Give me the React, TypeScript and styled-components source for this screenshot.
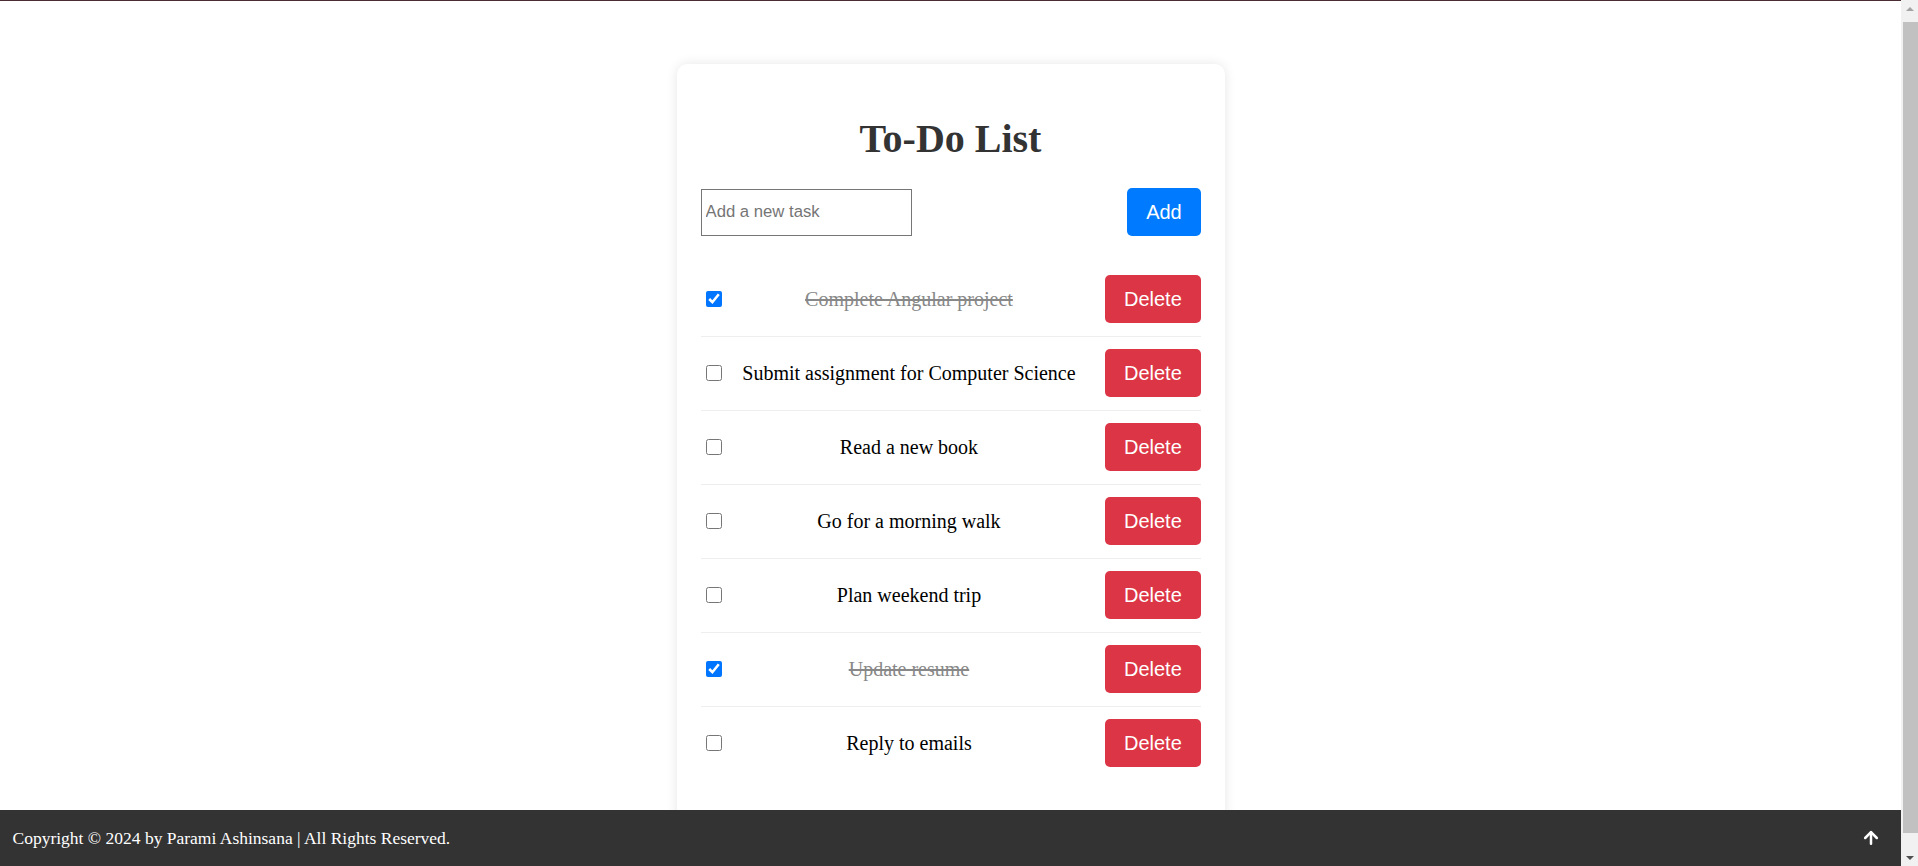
import React, { useState } from "react";
import styled, { createGlobalStyle } from "styled-components";
import { ArrowUp } from "lucide-react";

const SCROLLBAR = 17;

const GlobalStyle = createGlobalStyle`
  html, body {
    margin: 0;
    padding: 0;
    background: #ffffff;
    font-family: "Liberation Serif", "Times New Roman", serif;
  }
  ::-webkit-scrollbar {
    width: 0;
    height: 0;
  }
`;

const Page = styled.div`
  margin-right: ${SCROLLBAR}px;
`;

const TopLine = styled.div`
  height: 1px;
  background: #4a2c33;
`;

const Main = styled.main`
  display: flex;
  justify-content: center;
  padding: 63px 0 54px;
`;

const Card = styled.section`
  width: 500px;
  padding: 25px 24px;
  background: #ffffff;
  border-radius: 10px;
  box-shadow: 0 0 12px rgba(0, 0, 0, 0.1);
`;

const Title = styled.h1`
  margin: 25.5px 0 26.8px;
  text-align: center;
  font-size: 40px;
  font-weight: bold;
  color: #333333;
  font-family: "Liberation Serif", "Times New Roman", serif;
`;

const InputRow = styled.div`
  display: flex;
  justify-content: space-between;
  align-items: center;
  margin-bottom: 26.5px;
`;

const TaskInput = styled.input`
  box-sizing: border-box;
  width: 211px;
  height: 47px;
  padding: 0 4px;
  border: 1px solid #767676;
  border-radius: 0;
  font-family: "Liberation Sans", Arial, sans-serif;
  font-size: 16.7px;
  color: #000;
  &::placeholder {
    color: #757575;
  }
`;

const Button = styled.button<{ $variant: "add" | "delete" }>`
  box-sizing: border-box;
  height: 48px;
  padding: 0 18.75px;
  border: none;
  border-radius: 5px;
  background: ${(p) => (p.$variant === "add" ? "#007bff" : "#dc3545")};
  color: #ffffff;
  font-family: "Liberation Sans", Arial, sans-serif;
  font-size: 20px;
  cursor: pointer;
  flex-shrink: 0;
  margin-left: ${(p) => (p.$variant === "delete" ? "12.5px" : "0")};
`;

const List = styled.ul`
  list-style: none;
  margin: 0 0 25px;
  padding: 0;
`;

const Row = styled.li`
  display: flex;
  align-items: center;
  padding: 12.5px 0;
  border-bottom: 1px solid #eeeeee;
  &:last-child {
    border-bottom: none;
  }
`;

const Check = styled.input`
  width: 16px;
  height: 16px;
  margin: 3.75px 3.75px 3.75px 5px;
  accent-color: #0075ff;
  flex-shrink: 0;
`;

const TaskText = styled.span<{ $done: boolean }>`
  flex: 1;
  text-align: center;
  font-size: 20px;
  font-family: "Liberation Serif", "Times New Roman", serif;
  color: ${(p) => (p.$done ? "#888888" : "#000000")};
  text-decoration: ${(p) => (p.$done ? "line-through" : "none")};
`;

const Footer = styled.footer`
  position: fixed;
  left: 0;
  right: ${SCROLLBAR}px;
  bottom: 0;
  height: 56px;
  background: #333333;
  color: #ffffff;
  display: flex;
  align-items: center;
  justify-content: space-between;
  padding: 0 20px 0 12.5px;
  font-family: "Liberation Serif", "Times New Roman", serif;
  font-size: 17.5px;
`;

const UpIcon = styled.span`
  display: flex;
  align-items: center;
  color: #ffffff;
`;

/* imitation of the browser's classic vertical scrollbar, overlaid at the right edge */
const ScrollBar = styled.div`
  position: fixed;
  top: 0;
  right: 0;
  bottom: 0;
  width: ${SCROLLBAR}px;
  background: #f1f1f1;
  display: flex;
  flex-direction: column;
`;

const ScrollButton = styled.div`
  height: ${SCROLLBAR}px;
  display: flex;
  align-items: center;
  justify-content: center;
  flex-shrink: 0;
`;

const Triangle = styled.span<{ $dir: "up" | "down" }>`
  width: 0;
  height: 0;
  border-left: 4px solid transparent;
  border-right: 4px solid transparent;
  ${(p) =>
    p.$dir === "up"
      ? "border-bottom: 4px solid #a3a3a3;"
      : "border-top: 4px solid #505050;"}
`;

const Track = styled.div`
  flex: 1;
  display: flex;
  flex-direction: column;
  padding: 5px 0 16px 2px;
`;

const Thumb = styled.div`
  flex: 1;
  background: #c1c1c1;
`;

type Task = { text: string; done: boolean };

const initial: Task[] = [
  { text: "Complete Angular project", done: true },
  { text: "Submit assignment for Computer Science", done: false },
  { text: "Read a new book", done: false },
  { text: "Go for a morning walk", done: false },
  { text: "Plan weekend trip", done: false },
  { text: "Update resume", done: true },
  { text: "Reply to emails", done: false },
];

export default function App() {
  const [tasks, setTasks] = useState<Task[]>(initial);
  const [value, setValue] = useState("");

  const toggle = (i: number) =>
    setTasks((t) => t.map((x, j) => (j === i ? { ...x, done: !x.done } : x)));
  const remove = (i: number) => setTasks((t) => t.filter((_, j) => j !== i));
  const add = () => {
    if (!value.trim()) return;
    setTasks((t) => [...t, { text: value.trim(), done: false }]);
    setValue("");
  };

  return (
    <>
      <GlobalStyle />
      <Page>
        <TopLine />
        <Main>
          <Card>
            <Title>To-Do List</Title>
            <InputRow>
              <TaskInput
                placeholder="Add a new task"
                value={value}
                onChange={(e) => setValue(e.target.value)}
              />
              <Button $variant="add" onClick={add}>
                Add
              </Button>
            </InputRow>
            <List>
              {tasks.map((t, i) => (
                <Row key={i}>
                  <Check type="checkbox" checked={t.done} onChange={() => toggle(i)} />
                  <TaskText $done={t.done}>{t.text}</TaskText>
                  <Button $variant="delete" onClick={() => remove(i)}>
                    Delete
                  </Button>
                </Row>
              ))}
            </List>
          </Card>
        </Main>
      </Page>
      <Footer>
        <span>Copyright © 2024 by Parami Ashinsana | All Rights Reserved.</span>
        <UpIcon>
          <ArrowUp size={20} strokeWidth={3} />
        </UpIcon>
      </Footer>
      <ScrollBar aria-hidden="true">
        <ScrollButton>
          <Triangle $dir="up" />
        </ScrollButton>
        <Track>
          <Thumb />
        </Track>
        <ScrollButton>
          <Triangle $dir="down" />
        </ScrollButton>
      </ScrollBar>
    </>
  );
}
